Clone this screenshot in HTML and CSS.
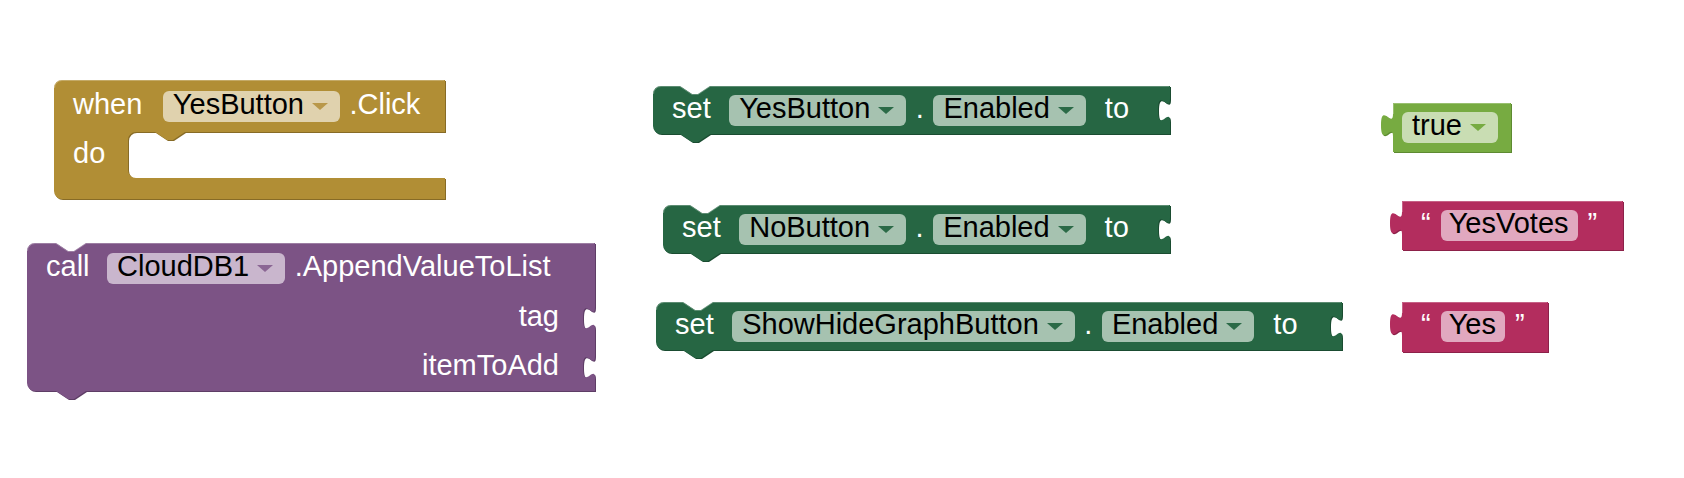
FILE: index.html
```html
<!DOCTYPE html>
<html lang="en">
  <head>
    <meta charset="UTF-8" />
    <title>Blocks</title>
    <meta name="viewport" content="width=device-width, initial-scale=1.0" />
    <link rel="stylesheet" href="styles.css">
  </head>
  <body>
    <div class="workspace">

      <!-- event block -->
      <div class="block c-event b-when">
        <svg class="shape">
          <path class="dark" transform="translate(1,1)" d="M0,8 A8,8 0 0 1 8,0 H391 V52 H131 l-12,8 -6,0 -12,-8 H82 A8,8 0 0 0 74,60 V90 A8,8 0 0 0 82,98 H391 V119 H8 A8,8 0 0 1 0,111 Z" />
          <path class="fill" d="M0,8 A8,8 0 0 1 8,0 H391 V52 H131 l-12,8 -6,0 -12,-8 H82 A8,8 0 0 0 74,60 V90 A8,8 0 0 0 82,98 H391 V119 H8 A8,8 0 0 1 0,111 Z" />
          <path class="light" d="M0.5,8 A7.5,7.5 0 0 1 8,0.5 H390" />
        </svg>
        <div class="row head">
          <span class="lbl lead">when</span>
          <span class="field">YesButton<span class="arrow"></span></span>
          <span class="lbl">.Click</span>
        </div>
        <div class="row do">
          <span class="lbl">do</span>
        </div>
      </div>

      <!-- method call -->
      <div class="block c-method b-call">
        <svg class="shape">
          <path class="dark" transform="translate(1,1)" d="M0,8 A8,8 0 0 1 8,0 H29 l12,8 6,0 12,-8 H568 V64 c0,15 -12,-12 -12,11.25 s12,-3.75 12,11.25 V113 c0,15 -12,-12 -12,11.25 s12,-3.75 12,11.25 V148 H59 l-12,8 -6,0 -12,-8 H8 A8,8 0 0 1 0,140 Z" />
          <path class="fill" d="M0,8 A8,8 0 0 1 8,0 H29 l12,8 6,0 12,-8 H568 V64 c0,15 -12,-12 -12,11.25 s12,-3.75 12,11.25 V113 c0,15 -12,-12 -12,11.25 s12,-3.75 12,11.25 V148 H59 l-12,8 -6,0 -12,-8 H8 A8,8 0 0 1 0,140 Z" />
          <path class="light" d="M0.5,8 A7.5,7.5 0 0 1 8,0.5 H29 l12,8 6,0 12,-8 H567" />
        </svg>
        <div class="row top">
          <span class="lbl lead">call</span>
          <span class="field">CloudDB1<span class="arrow"></span></span>
          <span class="lbl">.AppendValueToList</span>
        </div>
        <div class="row in">
          <span class="lbl">tag</span>
        </div>
        <div class="row in">
          <span class="lbl">itemToAdd</span>
        </div>
      </div>

      <!-- setters -->
      <div class="block c-set b-set1">
        <svg class="shape">
          <path class="dark" transform="translate(1,1)" d="M0,8 A8,8 0 0 1 8,0 H27 l12,8 6,0 12,-8 H517 V13 c0,15 -12,-12 -12,11.25 s12,-3.75 12,11.25 V48 H57 l-12,8 -6,0 -12,-8 H8 A8,8 0 0 1 0,40 Z" />
          <path class="fill" d="M0,8 A8,8 0 0 1 8,0 H27 l12,8 6,0 12,-8 H517 V13 c0,15 -12,-12 -12,11.25 s12,-3.75 12,11.25 V48 H57 l-12,8 -6,0 -12,-8 H8 A8,8 0 0 1 0,40 Z" />
          <path class="light" d="M0.5,8 A7.5,7.5 0 0 1 8,0.5 H27 l12,8 6,0 12,-8 H516" />
        </svg>
        <div class="row">
          <span class="lbl lead">set</span>
          <span class="field">YesButton<span class="arrow"></span></span>
          <span class="lbl">.</span>
          <span class="field">Enabled<span class="arrow"></span></span>
          <span class="lbl trail">to</span>
        </div>
      </div>

      <div class="block c-set b-set2">
        <svg class="shape">
          <path class="dark" transform="translate(1,1)" d="M0,8 A8,8 0 0 1 8,0 H27 l12,8 6,0 12,-8 H507 V13 c0,15 -12,-12 -12,11.25 s12,-3.75 12,11.25 V48 H57 l-12,8 -6,0 -12,-8 H8 A8,8 0 0 1 0,40 Z" />
          <path class="fill" d="M0,8 A8,8 0 0 1 8,0 H27 l12,8 6,0 12,-8 H507 V13 c0,15 -12,-12 -12,11.25 s12,-3.75 12,11.25 V48 H57 l-12,8 -6,0 -12,-8 H8 A8,8 0 0 1 0,40 Z" />
          <path class="light" d="M0.5,8 A7.5,7.5 0 0 1 8,0.5 H27 l12,8 6,0 12,-8 H506" />
        </svg>
        <div class="row">
          <span class="lbl lead">set</span>
          <span class="field">NoButton<span class="arrow"></span></span>
          <span class="lbl">.</span>
          <span class="field">Enabled<span class="arrow"></span></span>
          <span class="lbl trail">to</span>
        </div>
      </div>

      <div class="block c-set b-set3">
        <svg class="shape">
          <path class="dark" transform="translate(1,1)" d="M0,8 A8,8 0 0 1 8,0 H27 l12,8 6,0 12,-8 H686 V13 c0,15 -12,-12 -12,11.25 s12,-3.75 12,11.25 V48 H57 l-12,8 -6,0 -12,-8 H8 A8,8 0 0 1 0,40 Z" />
          <path class="fill" d="M0,8 A8,8 0 0 1 8,0 H27 l12,8 6,0 12,-8 H686 V13 c0,15 -12,-12 -12,11.25 s12,-3.75 12,11.25 V48 H57 l-12,8 -6,0 -12,-8 H8 A8,8 0 0 1 0,40 Z" />
          <path class="light" d="M0.5,8 A7.5,7.5 0 0 1 8,0.5 H27 l12,8 6,0 12,-8 H685" />
        </svg>
        <div class="row">
          <span class="lbl lead">set</span>
          <span class="field">ShowHideGraphButton<span class="arrow"></span></span>
          <span class="lbl">.</span>
          <span class="field">Enabled<span class="arrow"></span></span>
          <span class="lbl trail">to</span>
        </div>
      </div>

      <!-- values -->
      <div class="block c-logic b-true">
        <svg class="shape">
          <path class="dark" transform="translate(1,1)" d="M0,0 H118 V49 H0 V33.5 c0,-15 -12,12 -12,-11.25 s12,3.75 12,-11.25 Z" />
          <path class="fill" d="M0,0 H118 V49 H0 V33.5 c0,-15 -12,12 -12,-11.25 s12,3.75 12,-11.25 Z" />
          <path class="light" d="M0.5,11 V0.5 H117" />
        </svg>
        <div class="row">
          <span class="field">true<span class="arrow"></span></span>
        </div>
      </div>

      <div class="block c-text b-str1">
        <svg class="shape">
          <path class="dark" transform="translate(1,1)" d="M0,0 H221 V49 H0 V33.5 c0,-15 -12,12 -12,-11.25 s12,3.75 12,-11.25 Z" />
          <path class="fill" d="M0,0 H221 V49 H0 V33.5 c0,-15 -12,12 -12,-11.25 s12,3.75 12,-11.25 Z" />
          <path class="light" d="M0.5,11 V0.5 H220" />
        </svg>
        <div class="row">
          <span class="lbl">“</span>
          <span class="field str">YesVotes</span>
          <span class="lbl">”</span>
        </div>
      </div>

      <div class="block c-text b-str2">
        <svg class="shape">
          <path class="dark" transform="translate(1,1)" d="M0,0 H146 V50 H0 V33.5 c0,-15 -12,12 -12,-11.25 s12,3.75 12,-11.25 Z" />
          <path class="fill" d="M0,0 H146 V50 H0 V33.5 c0,-15 -12,12 -12,-11.25 s12,3.75 12,-11.25 Z" />
          <path class="light" d="M0.5,11 V0.5 H145" />
        </svg>
        <div class="row">
          <span class="lbl">“</span>
          <span class="field str">Yes</span>
          <span class="lbl">”</span>
        </div>
      </div>

    </div>
  </body>
</html>
```

FILE: styles.css
```css
body {
  margin: 0;
  background: #fff;
  font-family: "Liberation Sans", Arial, Helvetica, sans-serif;
  font-size: 29px;
}

.workspace {
  position: relative;
  width: 1684px;
  height: 478px;
  overflow: hidden;
}

/* blocks sit on a free canvas */
.block {
  position: absolute;
}

.shape {
  position: absolute;
  left: 0;
  top: 0;
  width: 100%;
  height: 100%;
  overflow: visible;
}

.shape .light {
  fill: none;
  stroke: #fff;
  stroke-opacity: 0.25;
  stroke-width: 1;
}

.row {
  position: relative;
  display: flex;
  align-items: center;
  gap: 9.5px;
  height: 48px;
  padding-left: 19px;
  box-sizing: border-box;
}

.lbl {
  color: #fff;
  white-space: pre;
  padding-bottom: 4px;
}

.lead {
  margin-right: 9px;
}

.trail {
  margin-left: 9.5px;
}

.field {
  display: flex;
  align-items: center;
  gap: 8px;
  height: 31px;
  box-sizing: border-box;
  padding: 0 12px 4px 10px;
  border-radius: 6px;
  color: #000;
  white-space: pre;
}

.field.str {
  padding: 0 9px 4px 8px;
}

.arrow {
  width: 0;
  height: 0;
  margin-top: 4px;
  border-left: 8.5px solid transparent;
  border-right: 8.5px solid transparent;
  border-top: 7px solid #000;
}

/* colours per drawer */
.c-event .fill { fill: #b18e35; }
.c-event .dark { fill: #876b26; }
.c-event .field { background: #e0d2ae; }
.c-event .arrow { border-top-color: #b9984a; }

.c-method .fill { fill: #7c5385; }
.c-method .dark { fill: #5e3d66; }
.c-method .field { background: #c9b6cd; }
.c-method .arrow { border-top-color: #8b6694; }

.c-set .fill { fill: #266643; }
.c-set .dark { fill: #1a4c31; }
.c-set .field { background: #a6c2b0; }
.c-set .arrow { border-top-color: #2b6a47; }

.c-logic .fill { fill: #77ab41; }
.c-logic .dark { fill: #5d8a31; }
.c-logic .field { background: #c9ddb3; }
.c-logic .arrow { border-top-color: #77ab41; }

.c-text .fill { fill: #b32d5e; }
.c-text .dark { fill: #8c2149; }
.c-text .field { background: #e1a8bf; }

/* positions on the workspace */
.b-when { left: 54px; top: 80px; width: 391px; height: 119px; }
.b-when .head { height: 52px; }
.b-when .head .lead { margin-right: 11px; }
.b-when .do { height: 46px; }

.b-call { left: 27px; top: 243px; width: 568px; height: 148px; }
.b-call .top { height: 51px; }
.b-call .top .lead { margin-right: 8px; }
.b-call .in {
  height: 49px;
  justify-content: flex-end;
  padding-left: 0;
  padding-right: 36px;
}

.b-set1 { left: 653px; top: 86px; width: 517px; height: 48px; }
.b-set2 { left: 663px; top: 205px; width: 507px; height: 48px; }
.b-set3 { left: 656px; top: 302px; width: 686px; height: 48px; }

.b-true { left: 1393px; top: 103px; width: 118px; height: 49px; }
.b-true .row { height: 49px; padding-left: 9px; }

.b-str1 { left: 1402px; top: 201px; width: 221px; height: 49px; }
.b-str2 { left: 1402px; top: 302px; width: 146px; height: 50px; }
.b-str1 .row,
.b-str2 .row { height: 49px; padding-left: 19px; gap: 10px; }
```
